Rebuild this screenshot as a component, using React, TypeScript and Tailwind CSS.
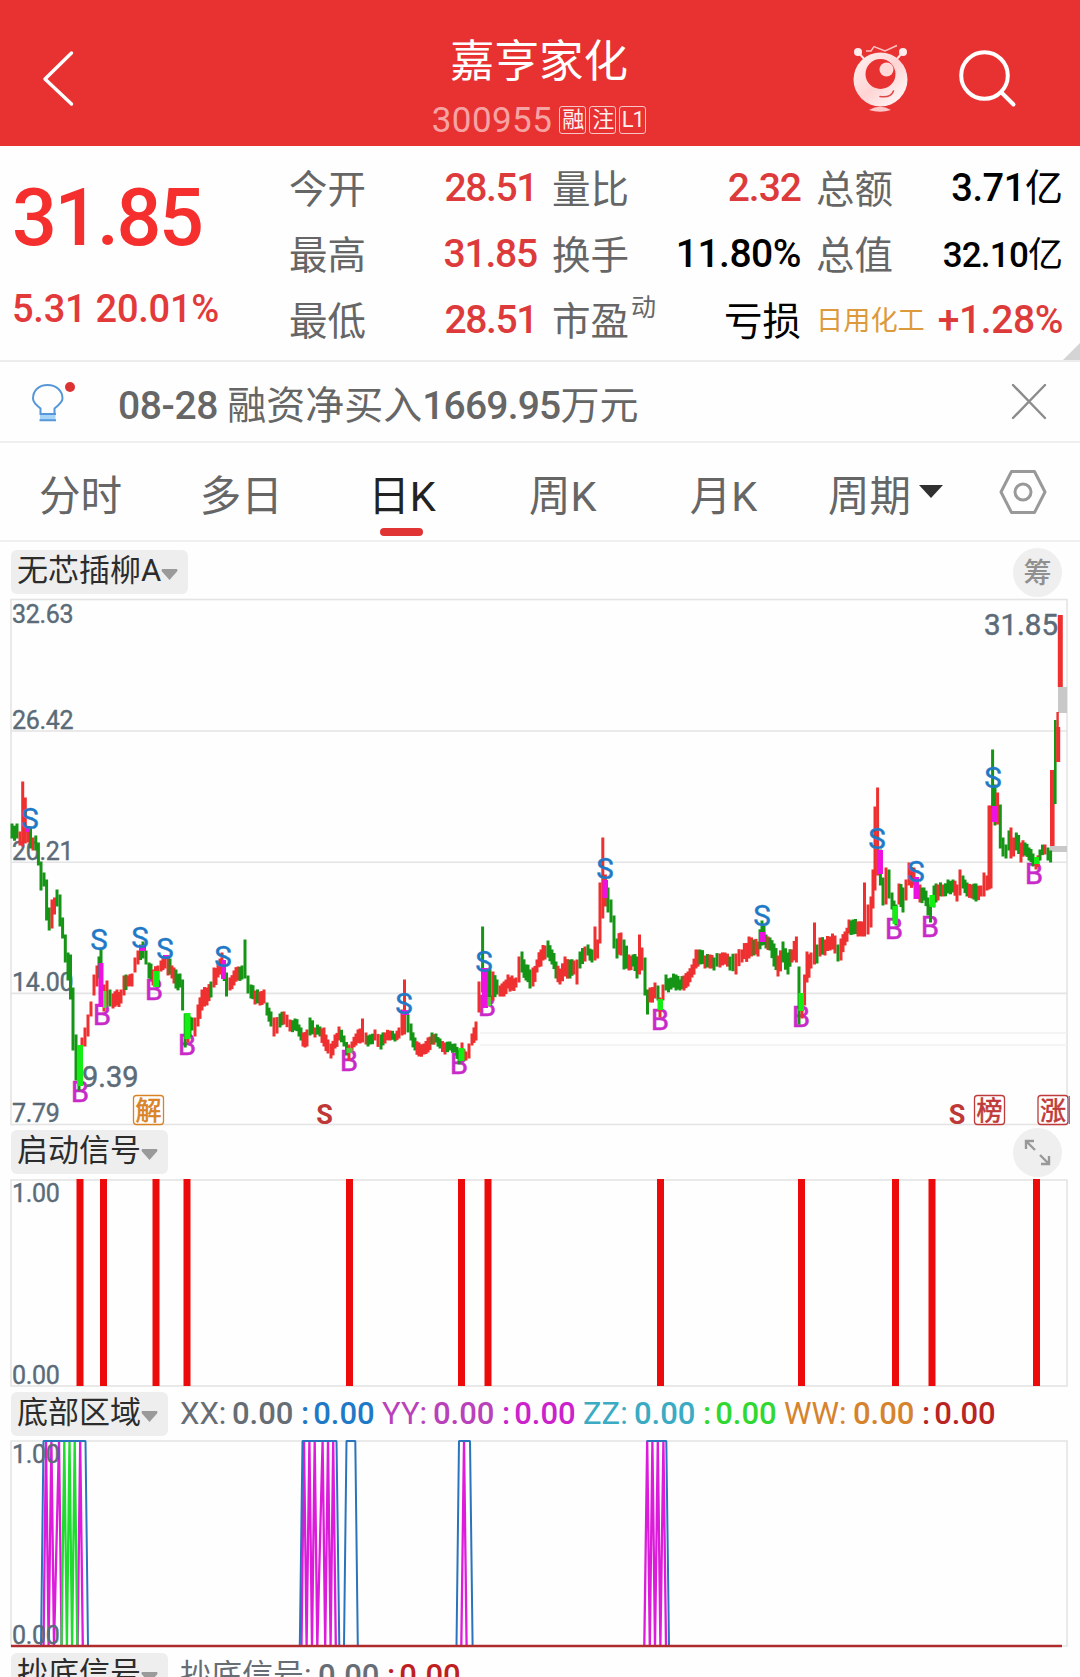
import type { ReactNode } from 'react';

const UP = '#ee3030';
const DOWN = '#159415';
const MAGENTA = '#ee12e0';
const LIME = '#14ee14';
const AXIS = '#5c6b78';
const GRID = '#e4e4e4';

type Bar = [x: number, high: number, low: number, dir: string];

// r = up, g = down, m = mixed
const series: Bar[] = [
  [12, 824, 838, 'g'], [17, 824, 838, 'g'], [20, 832, 845, 'm'], [22.7, 782, 846, 'r'], [25.3, 798, 843, 'r'], [28, 828, 842, 'r'],
  [30.5, 827, 848, 'g'], [33, 838, 850, 'r'], [35.8, 836, 850, 'g'], [38.4, 843, 865, 'g'], [41, 862, 890, 'g'], [44, 873, 886, 'g'],
  [46.6, 880, 920, 'g'], [49.2, 908, 930, 'g'], [52, 900, 928, 'r'], [54.5, 898, 914, 'r'], [57, 890, 906, 'g'], [60, 895, 926, 'g'],
  [62.6, 918, 938, 'g'], [65.3, 935, 962, 'g'], [68, 953, 980, 'g'], [70.5, 955, 999, 'g'], [73, 988, 1050, 'g'], [76, 1035, 1080, 'g'],
  [79, 1050, 1090, 'm'], [82, 1038, 1046, 'r'], [85, 1028, 1046, 'r'], [88, 1015, 1036, 'r'], [91, 1002, 1016, 'r'], [94, 975, 995, 'r'],
  [97, 966, 986, 'r'], [101, 948, 970, 'g'], [104, 985, 1011, 'm'], [107, 981, 1005, 'm'], [110, 990, 1006, 'g'], [113, 994, 1008, 'r'],
  [117, 990, 1005, 'm'], [121, 990, 1003, 'r'], [124, 976, 995, 'r'], [128, 976, 986, 'm'], [132, 974, 986, 'r'], [135, 958, 972, 'r'],
  [138, 951, 964, 'r'], [143, 942, 958, 'g'], [146, 951, 964, 'g'], [149, 963, 978, 'g'], [153, 970, 985, 'r'], [158, 966, 982, 'r'],
  [161, 961, 971, 'r'], [165, 956, 968, 'r'], [168, 957, 975, 'm'], [172, 966, 978, 'r'], [176, 970, 988, 'm'], [180, 974, 987, 'g'],
  [182.6, 980, 1010, 'g'], [185.2, 1014, 1047, 'g'], [188, 1015, 1042, 'r'], [192, 1018, 1030, 'g'], [195, 1018, 1036, 'r'], [198, 1005, 1026, 'r'],
  [202, 990, 1010, 'r'], [207, 988, 1005, 'r'], [211, 982, 997, 'm'], [214, 968, 987, 'r'], [218, 964, 977, 'r'], [222, 953, 970, 'r'],
  [226.5, 973, 996, 'g'], [230, 978, 990, 'r'], [234, 971, 985, 'r'], [238, 967, 980, 'r'], [242, 966, 979, 'g'], [245, 940, 978, 'g'],
  [248, 976, 993, 'g'], [251, 985, 998, 'g'], [255, 991, 1004, 'm'], [260, 992, 1005, 'm'], [264, 990, 1003, 'r'], [267, 1003, 1015, 'g'],
  [271, 1012, 1026, 'g'], [274, 1018, 1036, 'm'], [280, 1014, 1027, 'm'], [284, 1012, 1024, 'r'], [290, 1020, 1031, 'm'], [295, 1019, 1030, 'g'],
  [299, 1025, 1036, 'g'], [303, 1033, 1046, 'r'], [307, 1030, 1046, 'r'], [310, 1018, 1035, 'g'], [315, 1028, 1037, 'm'], [320, 1027, 1036, 'g'],
  [324, 1028, 1046, 'm'], [328, 1040, 1053, 'm'], [331, 1044, 1058, 'r'], [335, 1035, 1048, 'r'], [339, 1027, 1040, 'r'], [344, 1036, 1046, 'g'],
  [349, 1045, 1060, 'r'], [352, 1042, 1050, 'r'], [356, 1034, 1045, 'r'], [360, 1029, 1043, 'r'], [362.5, 1019, 1042, 'r'], [366, 1033, 1044, 'm'],
  [370, 1035, 1044, 'g'], [375, 1030, 1040, 'm'], [381, 1035, 1049, 'm'], [385, 1033, 1043, 'm'], [390, 1031, 1040, 'r'], [395, 1034, 1041, 'm'],
  [399, 1028, 1038, 'r'], [402, 1010, 1035, 'r'], [404.5, 980, 1034, 'r'], [408, 1015, 1032, 'g'], [411, 1024, 1040, 'g'], [415, 1038, 1050, 'g'],
  [419, 1043, 1056, 'm'], [424, 1044, 1054, 'r'], [428, 1038, 1052, 'r'], [432, 1033, 1044, 'm'], [436, 1034, 1042, 'g'], [440, 1039, 1048, 'm'],
  [445, 1043, 1054, 'm'], [450, 1042, 1050, 'g'], [455, 1044, 1052, 'g'], [459, 1050, 1064, 'g'], [462, 1043, 1055, 'r'], [466, 1052, 1060, 'r'],
  [469, 1044, 1058, 'r'], [472, 1034, 1045, 'r'], [476, 1022, 1040, 'r'], [479, 982, 1012, 'r'], [482.6, 927, 992, 'g'], [486, 970, 1002, 'r'],
  [490, 970, 1000, 'g'], [493, 972, 1000, 'm'], [497, 980, 994, 'g'], [500, 986, 996, 'r'], [504, 982, 996, 'r'], [508, 975, 988, 'r'],
  [512, 976, 990, 'm'], [516, 978, 987, 'r'], [519, 957, 982, 'r'], [522, 952, 972, 'g'], [526, 965, 980, 'g'], [530, 970, 988, 'm'],
  [533, 968, 986, 'r'], [537, 960, 972, 'r'], [541, 950, 966, 'r'], [545, 946, 959, 'r'], [548, 941, 957, 'g'], [552, 950, 964, 'g'],
  [556, 962, 978, 'g'], [560, 969, 984, 'r'], [565, 957, 976, 'r'], [570, 960, 978, 'm'], [574, 961, 974, 'r'], [577, 960, 984, 'r'],
  [580, 952, 968, 'g'], [585, 947, 961, 'r'], [588, 945, 955, 'g'], [592, 950, 962, 'm'], [595, 927, 960, 'r'], [597.6, 940, 958, 'm'],
  [600, 883, 943, 'r'], [602.8, 838, 918, 'r'], [605.4, 875, 906, 'r'], [608, 888, 912, 'g'], [611, 900, 922, 'g'], [614, 916, 948, 'g'],
  [617, 939, 958, 'g'], [621, 933, 955, 'r'], [624, 940, 969, 'm'], [629, 955, 970, 'm'], [633, 955, 966, 'g'], [637, 957, 978, 'g'],
  [639.5, 935, 974, 'r'], [642, 948, 970, 'r'], [645, 958, 995, 'g'], [647.5, 990, 1014, 'g'], [650, 988, 1002, 'r'], [655, 983, 998, 'm'],
  [658, 986, 1000, 'g'], [660, 998, 1017, 'r'], [663, 985, 1000, 'r'], [666, 975, 990, 'g'], [671, 978, 989, 'g'], [676, 975, 990, 'm'],
  [680, 980, 990, 'g'], [684, 976, 990, 'r'], [688, 972, 986, 'r'], [692, 965, 977, 'r'], [696, 950, 968, 'r'], [700, 950, 964, 'g'],
  [705, 956, 968, 'm'], [710, 955, 968, 'r'], [714, 958, 970, 'm'], [720, 954, 967, 'r'], [725, 953, 964, 'r'], [730, 957, 970, 'g'],
  [736, 954, 974, 'r'], [742, 950, 962, 'r'], [749, 937, 958, 'r'], [754, 940, 955, 'g'], [758, 942, 956, 'r'], [762, 921, 945, 'g'],
  [766, 935, 948, 'm'], [770, 938, 950, 'g'], [774, 944, 966, 'g'], [778, 956, 976, 'r'], [783, 942, 962, 'g'], [788, 953, 974, 'g'],
  [792, 950, 962, 'r'], [796.4, 937, 962, 'r'], [799, 967, 1024, 'g'], [802, 994, 1018, 'r'], [804.6, 975, 1005, 'r'], [807, 952, 982, 'r'],
  [811, 953, 968, 'r'], [814.5, 923, 964, 'r'], [817, 945, 963, 'g'], [820, 938, 956, 'm'], [825, 940, 955, 'r'], [830, 937, 950, 'm'],
  [835, 936, 953, 'r'], [838, 945, 961, 'g'], [841, 939, 960, 'r'], [845, 932, 945, 'r'], [849, 920, 933, 'r'], [853, 920, 934, 'g'],
  [858, 922, 936, 'm'], [862, 922, 936, 'r'], [864.5, 883, 936, 'r'], [868, 905, 934, 'm'], [871, 897, 927, 'r'], [873, 870, 908, 'r'],
  [875, 807, 890, 'r'], [877.6, 788, 875, 'r'], [880.4, 850, 885, 'g'], [883, 878, 905, 'g'], [886, 868, 904, 'r'], [889, 870, 898, 'g'],
  [892, 893, 909, 'g'], [896, 905, 925, 'g'], [899, 884, 904, 'r'], [903, 888, 912, 'g'], [906, 880, 900, 'r'], [909, 863, 885, 'r'],
  [914, 868, 885, 'r'], [920, 885, 902, 'r'], [924, 888, 900, 'g'], [928, 898, 915, 'g'], [930.5, 905, 922, 'm'], [934, 886, 907, 'm'],
  [938, 885, 900, 'm'], [943, 885, 896, 'm'], [948, 880, 893, 'g'], [953, 880, 892, 'g'], [957, 885, 901, 'r'], [960, 870, 895, 'r'],
  [963, 876, 888, 'g'], [967, 883, 896, 'm'], [972, 885, 898, 'r'], [976, 884, 901, 'g'], [981, 886, 896, 'r'], [984, 873, 896, 'r'],
  [987, 876, 890, 'r'], [989, 806, 889, 'r'], [991, 806, 888, 'r'], [992.6, 750, 808, 'g'], [995, 785, 825, 'g'], [997.6, 793, 824, 'r'],
  [1000.3, 805, 848, 'g'], [1003, 838, 856, 'g'], [1006, 845, 858, 'g'], [1009, 831, 850, 'g'], [1011, 828, 858, 'r'], [1013.6, 838, 856, 'r'],
  [1016.3, 833, 850, 'g'], [1021, 843, 862, 'r'], [1025, 843, 855, 'g'], [1029, 848, 860, 'g'], [1033, 854, 866, 'g'], [1036, 858, 869, 'r'],
  [1040, 850, 860, 'g'], [1045, 845, 854, 'r'], [1048, 848, 860, 'g'], [1050.6, 851, 862, 'g'],
];

const noise = (n: number) => {
  const v = Math.sin(n * 12.9898) * 43758.5453;
  return v - Math.floor(v);
};

// fill the gaps between key bars so that they stay about 2.6px apart
function expand(points: Bar[]) {
  const out: Bar[] = [];
  points.forEach((p, i) => {
    const pick = (d: string, seed: number) => (d === 'm' ? (noise(seed) > 0.45 ? 'r' : 'g') : d);
    out.push([p[0], p[1], p[2], pick(p[3], p[0])]);
    const next = points[i + 1];
    if (!next) return;
    const count = Math.round((next[0] - p[0]) / 2.62) - 1;
    for (let k = 1; k <= count; k++) {
      const t = k / (count + 1);
      const x = p[0] + (next[0] - p[0]) * t;
      const shift = (noise(x) - 0.5) * 5;
      out.push([x, p[1] + (next[1] - p[1]) * t + shift, p[2] + (next[2] - p[2]) * t + shift, pick(noise(x + 3) > 0.5 ? p[3] : next[3], x)]);
    }
  });
  return out;
}

const bars = expand(series);

const highlights: [number, number, number, number, string][] = [
  [25, 826, 5, 6, MAGENTA], [98.5, 963, 5, 44, MAGENTA], [139, 945, 7, 6, MAGENTA], [163, 955, 6, 4, MAGENTA], [221, 960, 5, 19, MAGENTA],
  [401, 1010, 8, 5, MAGENTA], [482, 968, 6, 40, MAGENTA], [602.5, 880, 5.5, 18, MAGENTA], [759.5, 932, 6, 10, MAGENTA], [877, 850, 6, 24, MAGENTA],
  [913.5, 877, 5.5, 22, MAGENTA], [992, 806, 6, 16, MAGENTA],
  [77, 1045, 6, 41, LIME], [103, 991, 3.5, 17, '#55d83c'], [153, 971, 6, 16, LIME], [184.5, 1013, 6, 26, LIME], [346.5, 1048, 6, 5, '#55c83c'],
  [458.5, 1048, 6, 13, LIME], [487.5, 997, 3.5, 9, '#55c83c'], [657.5, 999, 5.5, 11, LIME], [798.5, 993, 5.5, 18, LIME], [892.5, 906, 5.5, 18, LIME],
  [929.5, 895, 5.5, 12, LIME], [1034, 857, 5, 7, LIME],
];

const sells = [[30, 818], [99, 939], [140, 937], [165, 948], [223, 956], [404, 1003], [484, 961], [605, 868], [762, 915], [877, 838], [916, 871], [993, 777]];
const buys = [[80, 1091], [102, 1014], [154, 989], [187, 1044], [349, 1060], [459, 1063], [487, 1005], [660, 1019], [801, 1016], [894, 928], [930, 926], [1034, 873]];
const signals = [80, 103.5, 156, 187, 349.5, 461.5, 488, 660.5, 801.5, 895.5, 932, 1036.5];

function Tag({ x, text, color }: { x: number; text: string; color: string }) {
  return (
    <g>
      <rect x={x} y={1095.5} width={30} height={29} rx={3} fill="#fff" stroke={color} strokeWidth={1.3} />
      <text x={x + 15} y={1119.5} textAnchor="middle" fontSize={26} fill={color} stroke={color} strokeWidth={0.6}>{text}</text>
    </g>
  );
}

function AxisLabel({ y, children }: { y: number; children: ReactNode }) {
  return <text x={12} y={y + 8.5} fontSize={25} letterSpacing={-0.3} fill={AXIS} stroke={AXIS} strokeWidth={0.4}>{children}</text>;
}

function PriceChart() {
  return (
    <svg className="block shrink-0" width="1080" height="536" viewBox="0 594 1080 536">
      <g fill="none" stroke={GRID} strokeWidth={1.6}>
        <rect x={11} y={599.5} width={1056} height={525} />
        <path d="M11 731H1067M11 862.3H1067M11 993.4H1067" />
        <path d="M480 1033H1067M480 1045H1067" stroke="#f1f1f1" />
      </g>
      <AxisLabel y={614}>32.63</AxisLabel>
      <AxisLabel y={720}>26.42</AxisLabel>
      <AxisLabel y={851}>20.21</AxisLabel>
      <AxisLabel y={982}>14.00</AxisLabel>
      <AxisLabel y={1113}>7.79</AxisLabel>
      <rect x={1058} y={687} width={9} height={26} fill="#c8c8c8" />
      <rect x={1050} y={846} width={17} height={6} fill="#c8c8c8" />
      {buys.map(([x, y]) => (
        <text key={x} x={x} y={y + 10.5} fontSize={29.5} textAnchor="middle" fill="#c929c9" stroke="#c929c9" strokeWidth={0.5}>B</text>
      ))}
      {bars.map(([x, high, low, dir]) => (
        <rect key={x} x={x - 1.5} y={high - 0.5} width={3} height={low - high + 1} fill={dir === 'r' ? UP : DOWN} />
      ))}
      <rect x={1050} y={770} width={4.6} height={76} fill={UP} />
      <rect x={1054} y={720} width={2.6} height={84} fill={DOWN} />
      <rect x={1056.4} y={712} width={2.4} height={50} fill={UP} />
      <rect x={1056.4} y={727} width={3.8} height={35} fill={UP} />
      <rect x={1057.8} y={615} width={5} height={72} fill={UP} />
      {highlights.map(([x, y, w, h, fill]) => (
        <rect key={x} x={x} y={y} width={w} height={h} fill={fill} />
      ))}
      {sells.map(([x, y]) => (
        <text key={x} x={x} y={y + 10.5} fontSize={29.5} textAnchor="middle" fill="#1f79c6" stroke="#1f79c6" strokeWidth={0.4}>S</text>
      ))}
      <text x={82} y={1086.5} fontSize={29} fill={AXIS} stroke={AXIS} strokeWidth={0.5}>9.39</text>
      <text x={1058} y={635} fontSize={29.5} textAnchor="end" fill={AXIS} stroke={AXIS} strokeWidth={0.5}>31.85</text>
      <Tag x={133.5} text="解" color="#d98326" />
      <Tag x={974.5} text="榜" color="#bf3a3a" />
      <Tag x={1038} text="涨" color="#bf3a3a" />
      <path d="M1069.3 1096V1124" stroke="#5b7fb0" strokeWidth={1.3} />
      <g fontSize={27} fontWeight={700} textAnchor="middle" fill="#bf3838">
        <text x={324.5} y={1123.5}>S</text>
        <text x={957} y={1123.5}>S</text>
      </g>
    </svg>
  );
}

function SignalChart() {
  return (
    <svg className="block shrink-0" width="1080" height="213" viewBox="0 1177 1080 213">
      <rect x={11} y={1180} width={1056} height={206} fill="none" stroke={GRID} strokeWidth={1.6} />
      <AxisLabel y={1193}>1.00</AxisLabel>
      <AxisLabel y={1375}>0.00</AxisLabel>
      {signals.map((x) => (
        <rect key={x} x={x - 3.5} y={1179} width={7} height={207} fill="#ec0a0a" />
      ))}
    </svg>
  );
}

const TOP = 1441;
const BASE = 1646;

const zigzag = (start: number, peaks: number[]) =>
  `M${start} ${BASE}` + peaks.map((p) => `L${p} ${TOP}L${p + 2.6} ${BASE}`).join('');

function BottomChart() {
  return (
    <svg className="block shrink-0" width="1080" height="212" viewBox="0 1438 1080 212">
      <path d={`M11 ${BASE}V${TOP}H1067V${BASE}Z`} fill="none" stroke={GRID} strokeWidth={1.6} />
      <g fill="none" strokeWidth={2.3} strokeLinejoin="bevel">
        <path stroke="#dc1cda" d={zigzag(43.5, [46, 51.4, 59])} />
        <path stroke="#dc1cda" d={zigzag(77.6, [80.2])} />
        <path stroke="#20dc30" d={zigzag(61.5, [64.3, 69.5, 74.7])} />
        <path stroke="#dc1cda" d={zigzag(301.5, [304, 309.4, 314.7, 322.6, 328, 333.2])} />
        <path stroke="#dc1cda" d={zigzag(461.3, [464])} />
        <path stroke="#dc1cda" d={zigzag(644.3, [647.2, 652.4, 657.8, 663.4])} />
        <path
          stroke="#2a74bd"
          strokeWidth={2}
          d="M41 1646L43.5 1441H85.5L88 1646M299.8 1646L302.5 1441H336.5L339.3 1646M344 1646L346.5 1441H355.3L357.8 1646M456.5 1646L459 1441H470L472.6 1646M646.5 1441H666.3L669 1646"
        />
      </g>
      <AxisLabel y={1454}>1.00</AxisLabel>
      <AxisLabel y={1635}>0.00</AxisLabel>
      <path d="M11 1646H1062" stroke="#b02c2c" strokeWidth={2.6} />
    </svg>
  );
}

function Chip({ children }: { children: ReactNode }) {
  return (
    <div className="flex h-11 shrink-0 items-center rounded-md bg-[#eeeeee] pr-[10px] pl-[6px] text-[31px] leading-none text-[#2c2c2c]">
      <span className="-mt-[3px]">{children}</span>
      <svg className="mt-[5px]" width="17" height="11" viewBox="0 0 17 11">
        <path d="M1 0H16Q17 1 16 2.5L8.5 11L1 2.5Q0 1 1 0Z" fill="#9a9a9a" />
      </svg>
    </div>
  );
}

function Stat({ label, sup, value, valueClass }: { label: string; sup?: string; value: ReactNode; valueClass: string }) {
  return (
    <div className="flex h-[66px] items-center justify-between">
      <span className="flex pt-[5px] text-[38.5px] text-[#666]">
        {label}
        {sup && <sup className="-top-[8px] ml-0.5 text-[25px] leading-none">{sup}</sup>}
      </span>
      <span className={valueClass}>{value}</span>
    </div>
  );
}

function Amount({ color, children }: { color: string; children: ReactNode }) {
  return <span className={`w-[81px] ${color}`}><span className="mr-1">:</span>{children}</span>;
}

const tabs = ['分时', '多日', '日K', '周K', '月K'];

export default function App() {
  return (
    <div className="flex h-[1677px] w-[1080px] flex-col overflow-hidden bg-[#fefefe] font-[Roboto,'Noto_Sans_CJK_SC',sans-serif] leading-none whitespace-nowrap">
      <header className="flex h-[146px] shrink-0 items-start justify-between bg-[#e83131] text-white">
        <svg className="mt-[49px] ml-[41px]" width="240" height="60" viewBox="0 0 240 60" fill="none" stroke="#fff" strokeWidth="3.4" strokeLinecap="round" strokeLinejoin="round">
          <path d="M30.5 4L4 30L30.5 55" />
        </svg>
        <div className="ml-[6px] flex w-[500px] flex-col items-center pt-[39px]">
          <h1 className="text-[44.5px] leading-[46px]">嘉亨家化</h1>
          <div className="mt-[19px] flex items-center gap-[3px]">
            <span className="mr-1 pt-0.5 text-[35px] leading-[30px] tracking-[0.4px] text-[#f6a3a3]">300955</span>
            {['融', '注', 'L1'].map((t) => (
              <span key={t} className="flex h-7 w-[27px] items-center justify-center rounded-[3px] border border-[#f9c4c4] text-[22px] tracking-tighter text-[#fff0f0]">{t}</span>
            ))}
          </div>
        </div>
        <div className="flex w-[289px] pt-[40px] pl-[60px]">
          <svg width="60" height="74" viewBox="850 40 60 74">
            <defs>
              <linearGradient id="mascot" x1="0" y1="0" x2="1" y2="1">
                <stop offset="0" stopColor="#fff3f3" />
                <stop offset="0.5" stopColor="#ffd4d4" />
                <stop offset="1" stopColor="#fff" />
              </linearGradient>
            </defs>
            <path d="M857 52L864 60M902 52L895 60" stroke="#ffe4e4" strokeWidth="2" />
            <circle cx="857" cy="52" r="4" fill="#ffecec" />
            <circle cx="902" cy="52" r="4" fill="#ffecec" />
            <path d="M865 51H870L873 46.5L884 51L896 45.5" fill="none" stroke="#ffc4c4" strokeWidth="1.4" />
            <circle cx="879.5" cy="79.5" r="27" fill="url(#mascot)" />
            <circle cx="879.5" cy="74" r="15" fill="#e83131" />
            <circle cx="885.5" cy="69.5" r="7" fill="#ffd8d8" />
            <path d="M879 96.5Q890 98 892.5 91" fill="none" stroke="#e04848" strokeWidth="1.6" strokeLinecap="round" />
            <path d="M868 110Q879 103.5 890 110Q879 113.5 868 110Z" fill="#ffc8c8" />
          </svg>
          <svg className="ml-[46px]" width="62" height="74" viewBox="956 40 62 74" fill="none" stroke="#fff" strokeWidth="4" strokeLinecap="round">
            <circle cx="983.5" cy="75.5" r="23.3" />
            <path d="M1001 93L1012.5 104.5" />
          </svg>
        </div>
      </header>

      <section className="relative flex h-[216px] shrink-0 border-b-2 border-[#ececec] text-[39px] font-medium">
        <div className="w-[289px] shrink-0 pl-[12px]">
          <div className="pt-[33px] text-[79px] font-medium tracking-[-2.4px] text-[#f52e2e]">31.85</div>
          <div className="mt-[32px] text-[38px] tracking-[-0.25px] text-[#e23a3a]">5.31 20.01%</div>
        </div>
        <div className="w-[248px] shrink-0 pt-[9px] font-normal">
          <Stat label="今开" value="28.51" valueClass="font-medium tracking-[-1.4px] text-[#dd3b3b]" />
          <Stat label="最高" value="31.85" valueClass="font-medium tracking-[-1.2px] text-[#dd3b3b]" />
          <Stat label="最低" value="28.51" valueClass="font-medium tracking-[-1.4px] text-[#dd3b3b]" />
        </div>
        <div className="ml-[15px] w-[249px] shrink-0 pt-[9px] font-normal">
          <Stat label="量比" value="2.32" valueClass="font-medium tracking-[-1px] text-[#dd3b3b]" />
          <Stat label="换手" value="11.80%" valueClass="font-medium tracking-[-0.5px] text-black" />
          <Stat label="市盈" sup="动" value="亏损" valueClass="pt-1 text-[38.5px] text-black" />
        </div>
        <div className="ml-[15px] w-[247px] shrink-0 pt-[9px] font-normal">
          <Stat label="总额" value={<><b className="font-medium tracking-[-0.4px]">3.71</b>亿</>} valueClass="text-[38px] text-black" />
          <Stat label="总值" value={<><b className="font-medium tracking-[-0.8px]">32.10</b>亿</>} valueClass="pt-[2px] text-[35px] text-black" />
          <div className="flex h-[66px] items-center justify-between">
            <span className="pt-1 text-[27.2px] text-[#dd9a3c]">日用化工</span>
            <span className="font-medium tracking-[-0.4px] text-[#dd3b3b]">+1.28%</span>
          </div>
        </div>
        <svg className="absolute right-0 bottom-0" width="17" height="17" viewBox="0 0 17 17">
          <path d="M17 0V17H0Z" fill="#d4d4d4" />
        </svg>
      </section>

      <section className="flex h-[81px] shrink-0 items-center border-b-2 border-[#efefef] text-[#666]">
        <svg className="ml-[28px]" width="50" height="46" viewBox="28 378 50 46">
          <path d="M40.5 412V407.5C36 404 33 401 33 397.5C33 389.5 39 384 47.5 384S62.5 389.5 62.5 397.5C62.5 401 59 404 54.5 407.5V412" fill="none" stroke="#5597d8" strokeWidth="2" />
          <rect x="40" y="412" width="15.5" height="8" fill="#a8d4f6" />
          <path d="M39.5 413H56M39.5 419.3H56" stroke="#5597d8" strokeWidth="2" />
          <circle cx="70" cy="386" r="5" fill="#dc3232" />
        </svg>
        <span className="ml-[40px] pt-[9px] text-[39px]"><b className="font-medium tracking-[-0.4px]">08-28 </b>融资净买入<b className="font-medium tracking-[-0.8px]">1669.95</b>万元</span>
        <svg className="mr-[33px] ml-auto" width="36" height="36" viewBox="0 0 36 36" stroke="#8c8c8c" strokeWidth="2.4" strokeLinecap="round">
          <path d="M2 1L34 34M34 1L2 34" />
        </svg>
      </section>

      <nav className="flex h-[99px] shrink-0 items-center border-b-2 border-[#efefef] text-[41.5px] text-[#666]">
        {tabs.map((tab) => (
          <div key={tab} className="relative flex h-full w-[160.8px] items-center justify-center pt-2.5">
            <span className={tab === '日K' ? 'text-[#222]' : ''}>{tab}</span>
            {tab === '日K' && <span className="absolute bottom-1 h-2 w-[43px] rounded-full bg-[#e03434]" />}
          </div>
        ))}
        <div className="ml-[24px] flex items-center">
          <span className="pt-2.5">周期</span>
          <svg className="ml-[8px]" width="24" height="13" viewBox="0 0 24 13"><path d="M0 0H24L12 13Z" fill="#303030" /></svg>
        </div>
        <svg className="ml-[56px]" width="48" height="46" viewBox="0 0 48 46" fill="none" stroke="#999" strokeWidth="3" strokeLinejoin="round">
          <path d="M12.5 2.5H35.5L46 23L35.5 43.5H12.5L2 23Z" />
          <circle cx="24" cy="23" r="8" />
        </svg>
      </nav>

      <div className="flex h-[52px] shrink-0 items-center justify-between pt-2 pr-[18px] pl-[11px]">
        <Chip>无芯插柳A</Chip>
        <span className="flex size-[49px] items-center justify-center rounded-full bg-[#efefef] pt-1 text-[28px] font-medium text-[#909090]">筹</span>
      </div>
      <PriceChart />

      <div className="flex h-[47px] shrink-0 items-center justify-between pr-[18px] pb-[3px] pl-[11px]">
        <Chip>启动信号</Chip>
        <svg width="49" height="49" viewBox="0 0 49 49" fill="none" stroke="#999" strokeWidth="2.4">
          <circle cx="24.5" cy="24.5" r="24.5" fill="#efefef" stroke="none" />
          <path d="M13 21V13H21M13 13L22 22M36 28V36H28M36 36L27 27" />
        </svg>
      </div>
      <SignalChart />

      <div className="flex h-12 shrink-0 items-center pb-px pl-[11px] text-[31px]">
        <Chip>底部区域</Chip>
        <div className="ml-[12px] flex font-medium">
          <span className="w-[121px] text-[#666d75]"><i className="inline-block w-[52px] font-normal not-italic">XX:</i>0.00</span>
          <Amount color="text-[#1f79c6]">0.00</Amount>
          <span className="w-[120px] text-[#b941b9]"><i className="inline-block w-[51px] font-normal not-italic">YY:</i>0.00</span>
          <Amount color="text-[#cb22cb]">0.00</Amount>
          <span className="w-[120px] text-[#3aabc3]"><i className="inline-block w-[51px] font-normal not-italic">ZZ:</i>0.00</span>
          <Amount color="text-[#31d831]">0.00</Amount>
          <span className="w-[138px] text-[#d6832e]"><i className="inline-block w-[69px] font-normal not-italic">WW:</i>0.00</span>
          <Amount color="text-[#b92424]">0.00</Amount>
        </div>
      </div>
      <BottomChart />

      <div className="flex h-12 shrink-0 items-center pt-[2px] pl-[11px] text-[31px]">
        <Chip>抄底信号</Chip>
        <div className="ml-[12px] flex font-medium">
          <span className="w-[207px] text-[#666d75]"><i className="inline-block w-[138px] font-normal not-italic">抄底信号:</i>0.00</span>
          <Amount color="text-[#c01f1f]">0.00</Amount>
        </div>
      </div>
    </div>
  );
}
